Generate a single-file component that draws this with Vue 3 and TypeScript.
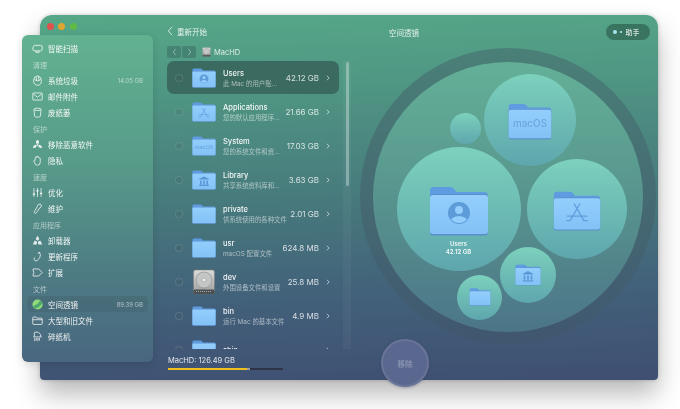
<script setup lang="ts">
interface NavItem { label: string; icon: string; size?: string; active?: boolean }
interface NavGroup { title?: string; items: NavItem[] }

const groups: NavGroup[] = [
  { items: [{ label: '智能扫描', icon: 'i-scan' }] },
  { title: '清理', items: [
    { label: '系统垃圾', icon: 'i-trash', size: '14.05 GB' },
    { label: '邮件附件', icon: 'i-mail' },
    { label: '废纸篓', icon: 'i-bin' },
  ] },
  { title: '保护', items: [
    { label: '移除恶意软件', icon: 'i-bio' },
    { label: '隐私', icon: 'i-hand' },
  ] },
  { title: '速度', items: [
    { label: '优化', icon: 'i-sliders' },
    { label: '维护', icon: 'i-wrench' },
  ] },
  { title: '应用程序', items: [
    { label: '卸载器', icon: 'i-uninstall' },
    { label: '更新程序', icon: 'i-update' },
    { label: '扩展', icon: 'i-ext' },
  ] },
  { title: '文件', items: [
    { label: '空间透镜', icon: 'i-lens', size: '89.39 GB', active: true },
    { label: '大型和旧文件', icon: 'i-folder' },
    { label: '碎纸机', icon: 'i-shred' },
  ] },
]

const files = [
  { name: 'Users', desc: '此 Mac 的用户账...', size: '42.12 GB', icon: 'f-user', active: true },
  { name: 'Applications', desc: '您的默认应用程序...', size: '21.66 GB', icon: 'f-app' },
  { name: 'System', desc: '您的系统文件和资...', size: '17.03 GB', icon: 'f-mac' },
  { name: 'Library', desc: '共享系统资料库和...', size: '3.63 GB', icon: 'f-lib' },
  { name: 'private', desc: '供系统使用的各种文件', size: '2.01 GB', icon: 'f-plain' },
  { name: 'usr', desc: 'macOS 配置文件', size: '624.8 MB', icon: 'f-plain' },
  { name: 'dev', desc: '外围设备文件和设置', size: '25.8 MB', icon: 'hdd' },
  { name: 'bin', desc: '运行 Mac 的基本文件', size: '4.9 MB', icon: 'f-plain' },
  { name: 'sbin', desc: '', size: '', icon: 'f-plain' },
]

// bubbles are in screenshot coordinates, the main panel starts at 351,15
const OX = 351
const OY = 15
const bubbles = [
  { x: 458.5, y: 209, r: 62, icon: 'f-user', w: 60, h: 50, fy: 4, label: 'Users', size: '42.12 GB' },
  { x: 577, y: 209, r: 50, icon: 'f-app', w: 48, h: 40, fy: 4 },
  { x: 530, y: 120, r: 46, icon: 'f-mac', w: 44, h: 37, fy: 3 },
  { x: 465.5, y: 128.5, r: 15.5, icon: '', w: 0, h: 0, fy: 0 },
  { x: 528, y: 275, r: 28, icon: 'f-lib', w: 26, h: 22, fy: 0 },
  { x: 479.5, y: 297, r: 22.5, icon: 'f-plain', w: 22, h: 18, fy: 0 },
]

const bubbleStyle = (b: { x: number; y: number; r: number }) => ({
  left: `${b.x - b.r - OX}px`,
  top: `${b.y - b.r - OY}px`,
  width: `${b.r * 2}px`,
  height: `${b.r * 2}px`,
})
</script>

<template>
  <div class="page">
    <svg class="defs" aria-hidden="true">
      <defs>
        <linearGradient id="fbody" x1="0" y1="0" x2="0" y2="1">
          <stop offset="0" stop-color="#93cefc" />
          <stop offset="1" stop-color="#83c1f6" />
        </linearGradient>
        <linearGradient id="hddg" x1="0" y1="0" x2="0" y2="1">
          <stop offset="0" stop-color="#dcdcda" />
          <stop offset="1" stop-color="#9a9c9c" />
        </linearGradient>
      </defs>
      <symbol id="f-plain" viewBox="0 0 60 50">
        <path d="M1 12V5q0-4 4-4h15q4 0 6 3l1 2h28q4 0 4 4v8H1z" fill="#5f9be0" />
        <rect x="1" y="8" width="58" height="41.5" rx="3" fill="#5a8fcc" />
        <rect x="1" y="9" width="58" height="39" rx="3" fill="url(#fbody)" />
      </symbol>
      <symbol id="f-user" viewBox="0 0 60 50">
        <use href="#f-plain" />
        <circle cx="30" cy="27" r="11" fill="#5d9bd9" />
        <circle cx="30" cy="24" r="4" fill="#93cefc" />
        <path d="M22 33q8-6 16 0q-3 4-8 4t-8-4z" fill="#93cefc" />
      </symbol>
      <symbol id="f-app" viewBox="0 0 60 50">
        <use href="#f-plain" />
        <path d="M26.500 16l12 21M33.500 16l-12 21M18 31.500h24M17 37h3.500M39.500 37h3.500" stroke="#629edc" stroke-width="1.6" fill="none" stroke-linecap="round" />
      </symbol>
      <symbol id="f-lib" viewBox="0 0 60 50">
        <use href="#f-plain" />
        <path d="M30 16l12 6v2H18v-2zM20 26h4v10h-4zM28 26h4v10h-4zM36 26h4v10h-4zM18 37h24v3H18z" fill="#5b97d6" />
      </symbol>
      <symbol id="hdd" viewBox="0 0 24 26">
        <rect x="1.5" y="1" width="21" height="24" rx="2" fill="url(#hddg)" stroke="#77797a" stroke-width=".5" />
        <rect x="1.5" y="20.5" width="21" height="4.5" rx="1.5" fill="#4d5052" />
        <path d="M4 22.500h16" stroke="#a8aaaa" stroke-dasharray="1 1" />
        <circle cx="12" cy="11" r="8" fill="#c4c6c6" stroke="#86898a" stroke-width=".6" />
        <circle cx="12" cy="11" r="2" fill="#eeeeee" stroke="#86898a" stroke-width=".5" />
      </symbol>

      <symbol id="i-scan" viewBox="0 0 14 14" fill="none" stroke="currentColor" stroke-width="1.1">
        <path d="M3 3h8q2 0 2 2v3q0 2-2 2H4Q1 10 1 7.500 1 5 3 3zM5 10v2h4v-2" />
      </symbol>
      <symbol id="i-trash" viewBox="0 0 14 14" fill="none" stroke="currentColor" stroke-width="1.1">
        <path d="M2 7q0-5 5-6 5 1 5 6 0 6-5 6T2 7zM5 2l1 5M8 1.500L9 7M3 6q4 3 8 0" />
      </symbol>
      <symbol id="i-mail" viewBox="0 0 14 14" fill="none" stroke="currentColor" stroke-width="1.1">
        <rect x="1" y="2.5" width="12" height="9" rx="1" /><path d="M1.500 3.500L7 8l5.500-4.500" />
      </symbol>
      <symbol id="i-bin" viewBox="0 0 14 14" fill="none" stroke="currentColor" stroke-width="1.1">
        <ellipse cx="7" cy="3" rx="4.5" ry="1.5" /><path d="M2.500 3l.8 8.500q.2 1.500 3.700 1.500t3.700-1.500l.8-8.500" />
      </symbol>
      <symbol id="i-bio" viewBox="0 0 14 14" fill="currentColor" stroke="none">
        <circle cx="7" cy="7.5" r="1.2" /><path d="M7 1q-3 2-1.500 5h3Q10 3 7 1zM1 11q1-4 4.500-3.500L6 10q-2 2-5 1zM13 11q-1-4-4.500-3.500L8 10q2 2 5 1z" />
      </symbol>
      <symbol id="i-hand" viewBox="0 0 14 14" fill="none" stroke="currentColor" stroke-width="1.1">
        <path d="M4 7V3.500q1-1 1.500 0V2q1-1 2 0v1q1-1 1.500 0v1q1-.5 1.500 .5V9q0 4-3.500 4T3.500 10L2 7.500q1-1.500 2-.5z" />
      </symbol>
      <symbol id="i-sliders" viewBox="0 0 14 14" fill="none" stroke="currentColor" stroke-width="1.1">
        <path d="M2.500 1.500v11M7 1.500v11M11.500 1.500v11" /><path d="M1 9h3M5.500 5h3M10 8h3" stroke-width="1.6" />
      </symbol>
      <symbol id="i-wrench" viewBox="0 0 14 14" fill="none" stroke="currentColor" stroke-width="1.1">
        <path d="M9 1.500q3-.5 3 2 0 2-2 2.500L5.500 12.500q-1 1-2 .5t-.5-2L6.500 5Q7 2 9 1.500z" />
      </symbol>
      <symbol id="i-uninstall" viewBox="0 0 14 14" fill="currentColor" stroke="none">
        <path d="M7 1l2.400 4L7 7.200 4.600 5zM3.500 7l3 1.500-.5 3.500H1zM10.500 7l2.500 5H8l-.5-3.500z" />
      </symbol>
      <symbol id="i-update" viewBox="0 0 14 14" fill="none" stroke="currentColor" stroke-width="1.1">
        <path d="M9 2q3 2 1 6l-3 4q-2 1.500-3.500 0T3 9l1-1M7.500 3.500L9 1.500l1.500 1" />
      </symbol>
      <symbol id="i-ext" viewBox="0 0 14 14" fill="none" stroke="currentColor" stroke-width="1.1">
        <path d="M1.500 2.500h7L13 7l-4.500 4.500h-7V9q2-2 0-4z" />
      </symbol>
      <symbol id="i-lens" viewBox="0 0 14 14">
        <circle cx="7" cy="7" r="6.5" fill="#8fdc7c" />
        <path d="M13 4.500q-2 5.500-9 8Q2 11 1 9q6-1 9-7 2 1 3 2.500z" fill="#4fa86c" />
      </symbol>
      <symbol id="i-folder" viewBox="0 0 14 14" fill="none" stroke="currentColor" stroke-width="1.1">
        <path d="M1 3.500q0-1 1-1h3l1 1.500h6q1 0 1 1v6q0 1-1 1H2q-1 0-1-1zM1 6h12" />
      </symbol>
      <symbol id="i-shred" viewBox="0 0 14 14" fill="none" stroke="currentColor" stroke-width="1.1">
        <path d="M3 7V2.500q0-1 1-1h4l3 3V7M1.500 7.500h11M3.500 9v4M5.500 9v3M7.500 9v4M9.500 9v3" />
      </symbol>
    </svg>

    <div class="window">
      <div class="lights"><i class="red" /><i class="amber" /><i class="green" /></div>

      <aside class="sidebar">
        <section v-for="(g, i) in groups" :key="i" class="group">
          <h4 v-if="g.title">{{ g.title }}</h4>
          <div v-for="item in g.items" :key="item.label" :class="['nav', { on: item.active }]">
            <svg class="nav-icon"><use :href="`#${item.icon}`" /></svg>
            <span class="nav-label">{{ item.label }}</span>
            <span v-if="item.size" class="nav-size">{{ item.size }}</span>
          </div>
        </section>
      </aside>

      <div class="browser">
        <div class="back">
          <svg class="back-icon" viewBox="0 0 7 12"><path d="M6 1L1.500 6 6 11" /></svg>
          <span>重新开始</span>
        </div>
        <div class="crumbs">
          <button class="arrow"><svg viewBox="0 0 6 10"><path d="M4.500 1L1.500 5l3 4" /></svg></button>
          <button class="arrow"><svg viewBox="0 0 6 10"><path d="M1.500 1l3 4-3 4" /></svg></button>
          <svg class="disk"><use href="#hdd" /></svg>
          <span>MacHD</span>
        </div>
        <div class="list-wrap">
          <div class="list">
            <div v-for="f in files" :key="f.name" :class="['row', { on: f.active }]">
              <span class="radio" />
              <svg v-if="f.icon === 'hdd'" class="row-icon hdd" viewBox="0 0 24 26"><use href="#hdd" /></svg>
              <svg v-else-if="f.icon === 'f-mac'" class="row-icon" viewBox="0 0 60 50">
                <use href="#f-plain" width="60" height="50" />
                <text x="30" y="33" class="mac-text">macOS</text>
              </svg>
              <svg v-else class="row-icon" viewBox="0 0 60 50"><use :href="`#${f.icon}`" width="60" height="50" /></svg>
              <div class="row-text">
                <div class="row-name">{{ f.name }}</div>
                <div class="row-desc">{{ f.desc }}</div>
              </div>
              <span class="row-size">{{ f.size }}</span>
              <svg class="row-chev" viewBox="0 0 5 8"><path d="M1 1l3 3-3 3" /></svg>
            </div>
          </div>
          <div class="track"><div class="thumb" /></div>
        </div>
        <div class="total">MacHD: 126.49 GB</div>
        <div class="bar"><div class="bar-used" /><div class="bar-other" /></div>
      </div>

      <main class="main">
        <header class="main-head">
          <span class="title">空间透镜</span>
          <div class="helper"><i class="dot" /><i class="dot small" /><span>助手</span></div>
        </header>
        <div class="ring">
          <div class="ring-inner" />
        </div>
        <div v-for="b in bubbles" :key="b.x" class="bubble" :style="bubbleStyle(b)">
          <svg v-if="b.icon" viewBox="0 0 60 50" :width="b.w" :height="b.h" :style="{ marginTop: `${b.fy}px` }">
            <use :href="`#${b.icon === 'f-mac' ? 'f-plain' : b.icon}`" width="60" height="50" />
            <text v-if="b.icon === 'f-mac'" x="30" y="33" class="mac-text">macOS</text>
          </svg>
          <div v-if="b.label" class="bubble-label">{{ b.label }}<br />{{ b.size }}</div>
        </div>
      </main>

      <button class="remove"><span>移除</span></button>
    </div>
  </div>
</template>

<style scoped>
.page {
  width: 680px;
  height: 409px;
  box-sizing: border-box;
  padding: 15px 22px 29px 40px;
  overflow: hidden;
  background: #fff;
  font-family: Inter, "Noto Sans CJK SC", sans-serif;
  color: #fff;
}
.defs { position: absolute; width: 0; height: 0; }
.window {
  position: relative;
  display: flex;
  height: 365px;
  border-radius: 12px 12px 4px 4px;
  background: linear-gradient(178deg, #56a888 0%, #4f9583 22%, #477a7c 50%, #42617a 75%, #3f4f72 100%);
  box-shadow: 0 14px 26px rgba(0, 0, 0, .28), 0 0 4px rgba(0, 0, 0, .2);
  filter: blur(.4px);
}
.lights { position: absolute; left: 6.5px; top: 8px; display: flex; gap: 4.5px; }
.lights i { width: 7px; height: 7px; border-radius: 50%; }
.red { background: #e0524e; }
.amber { background: #e0a52e; }
.green { background: #5fbb45; }

.sidebar {
  position: absolute;
  left: -18px;
  top: 20px;
  width: 131px;
  height: 327px;
  box-sizing: border-box;
  padding: 5px 5px 0;
  border-radius: 6px;
  background: linear-gradient(180deg, #62b291 0%, #579a89 40%, #4d7a83 75%, #496780 100%);
  box-shadow: 0 2px 8px rgba(0, 0, 0, .12);
}
.group h4 {
  margin: 0;
  height: 16px;
  padding-left: 6px;
  padding-top: 4px;
  box-sizing: border-box;
  font-size: 7px;
  line-height: 12px;
  font-weight: 400;
  color: rgba(255, 255, 255, .55);
}
.nav {
  display: flex;
  align-items: center;
  height: 16px;
  padding: 0 5px;
  border-radius: 5px;
  font-size: 7.5px;
  color: rgba(255, 255, 255, .92);
}
.nav.on { background: rgba(60, 80, 90, .22); }
.nav-icon { width: 11px; height: 11px; color: rgba(255, 255, 255, .85); flex: none; }
.nav-label { margin-left: 5px; }
.nav-size { margin-left: auto; font-size: 6px; color: rgba(255, 255, 255, .55); }

.browser {
  margin-left: 127px;
  width: 184px;
  flex: none;
  display: flex;
  flex-direction: column;
}
.back {
  display: flex;
  align-items: center;
  gap: 4px;
  height: 12px;
  margin-top: 10px;
  font-size: 7.5px;
  color: rgba(255, 255, 255, .85);
}
.back-icon { width: 6px; height: 10px; fill: none; stroke: rgba(255, 255, 255, .85); stroke-width: 1; margin-left: 0; }
.crumbs {
  display: flex;
  align-items: center;
  gap: 1px;
  height: 12px;
  margin-top: 9px;
  font-size: 7.5px;
  color: rgba(255, 255, 255, .8);
}
.arrow {
  display: flex;
  align-items: center;
  justify-content: center;
  width: 14px;
  height: 12px;
  padding: 0;
  border: 0;
  border-radius: 2px;
  background: rgba(50, 90, 85, .4);
}
.arrow svg { width: 5px; height: 8px; fill: none; stroke: rgba(255, 255, 255, .5); stroke-width: 1; }
.disk { width: 9px; height: 10px; margin: 0 2px 0 5px; }
.list-wrap { display: flex; height: 289px; margin-top: 2px; }
.list { width: 172px; height: 289px; overflow: hidden; flex: none; }
.row {
  display: flex;
  align-items: center;
  height: 33px;
  margin: 1px 0 0.6px;
  border-radius: 7px;
  box-sizing: border-box;
  padding-right: 9px;
}
.row.on { background: #3a6a60; }
.radio {
  width: 8px;
  height: 8px;
  margin-left: 8px;
  flex: none;
  box-sizing: border-box;
  border-radius: 50%;
  border: 1px solid rgba(255, 255, 255, .12);
  background: rgba(60, 90, 90, .18);
}
.row-icon { width: 24px; height: 20px; margin-left: 9px; flex: none; }
.row-icon.hdd { height: 26px; }
.mac-text { font-size: 13.5px; font-weight: 500; text-anchor: middle; fill: #6ca7e0; }
.row-text { margin-left: 7px; padding-top: 2px; min-width: 0; flex: 1; }
.row-name { font-size: 7.5px; line-height: 10px; font-weight: 500; color: rgba(255, 255, 255, .92); }
.row-desc { font-size: 6.4px; line-height: 10px; color: rgba(255, 255, 255, .55); white-space: nowrap; }
.row-size { font-size: 8px; color: rgba(255, 255, 255, .78); white-space: nowrap; }
.row-chev { width: 4px; height: 6px; margin-left: 7px; fill: none; stroke: rgba(255, 255, 255, .8); stroke-width: 1; flex: none; }
.track { width: 8px; margin-left: 4px; background: rgba(255, 255, 255, .04); padding-top: 2px; box-sizing: border-box; }
.thumb { width: 3px; height: 124px; margin-left: 3px; border-radius: 2px; background: rgba(255, 255, 255, .32); }
.total { margin: 6px 0 0 1px; font-size: 7.5px; line-height: 11px; color: rgba(255, 255, 255, .85); white-space: nowrap; }
.bar { display: flex; width: 115px; height: 2.5px; margin: 1.5px 0 0 1px; background: #2f3348; }
.bar-used { width: 79px; background: #eec11d; }
.bar-other { width: 3px; background: #9a9aa0; }

.main { position: relative; flex: 1; }
.main-head {
  display: flex;
  align-items: center;
  justify-content: space-between;
  height: 16px;
  margin: 9px 8px 0 38px;
  font-size: 7.5px;
  color: rgba(255, 255, 255, .85);
}
.helper {
  display: flex;
  align-items: center;
  width: 44px;
  height: 16px;
  box-sizing: border-box;
  padding-left: 7px;
  border-radius: 8px;
  background: #38745f;
  color: #fff;
  font-size: 7px;
}
.dot { width: 4px; height: 4px; border-radius: 50%; background: #a9e3f2; }
.dot.small { width: 2px; height: 2px; margin: 0 4px 0 2.5px; background: #d0eef5; }
.ring {
  position: absolute;
  left: 9px;
  top: 33px;
  width: 296px;
  height: 296px;
  display: flex;
  align-items: center;
  justify-content: center;
  border-radius: 50%;
  background: linear-gradient(180deg, #4a8077 0%, #40566f 100%);
}
.ring-inner {
  width: 270px;
  height: 270px;
  margin-top: 2px;
  border-radius: 50%;
  background: linear-gradient(180deg, #64b097 0%, #5a9a8f 40%, #4c7588 100%);
}
.bubble {
  position: absolute;
  display: flex;
  flex-direction: column;
  align-items: center;
  justify-content: center;
  border-radius: 50%;
  background: linear-gradient(180deg, #7cd1bc 0%, #5ea6ad 100%);
}
.bubble-label {
  position: absolute;
  top: 93px;
  left: 0;
  right: 0;
  font-size: 6px;
  line-height: 8px;
  font-weight: 600;
  text-align: center;
  color: rgba(255, 255, 255, .92);
}
.remove {
  position: absolute;
  left: 341px;
  top: 324px;
  width: 48px;
  height: 48px;
  padding: 0;
  border-radius: 50%;
  border: 2px solid #6a7498;
  background: #5a6890;
  box-shadow: 0 1px 3px rgba(40, 50, 80, .3);
  color: rgba(255, 255, 255, .28);
  font: 600 7.5px Inter, "Noto Sans CJK SC", sans-serif;
}
</style>
